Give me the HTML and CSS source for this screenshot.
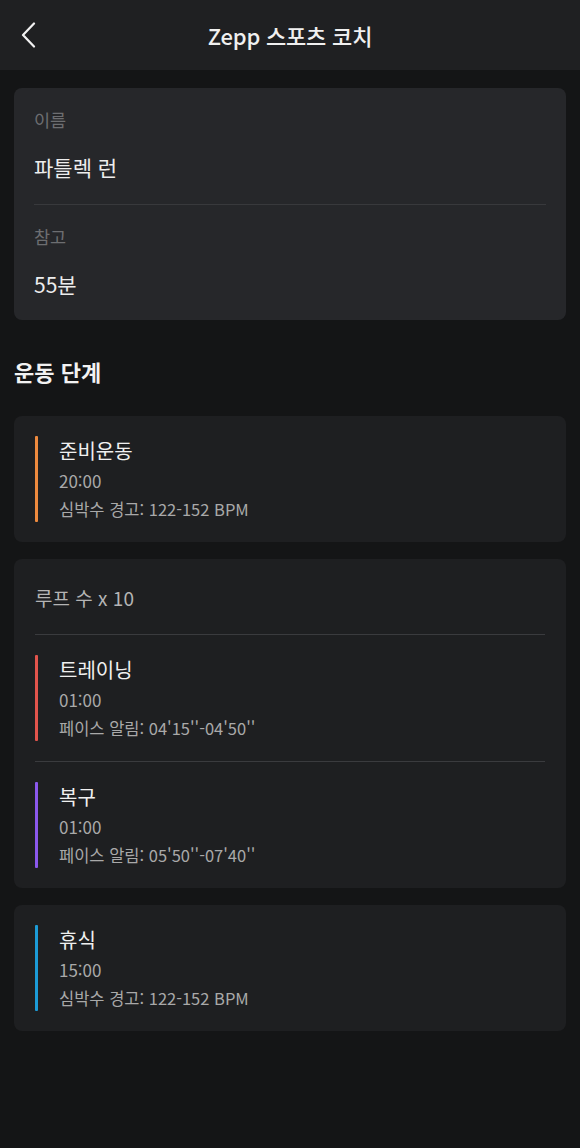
FILE: index.html
```html
<!DOCTYPE html>
<html lang="ko">
<head>
<meta charset="utf-8">
<title>Zepp 스포츠 코치</title>
<link rel="stylesheet" href="styles.css">
</head>
<body>
<header class="topbar">
  <button class="back" aria-label="뒤로">
    <svg width="16" height="26" viewBox="0 0 16 26"><path d="M13 1.5 L2 13 L13 24.5" fill="none" stroke="#f2f2f2" stroke-width="2.2" stroke-linecap="round" stroke-linejoin="round"/></svg>
  </button>
  <h1 class="title">Zepp 스포츠 코치</h1>
</header>
<main class="content">
  <section class="info-card">
    <div class="field">
      <div class="field-label">이름</div>
      <div class="field-value">파틀렉 런</div>
    </div>
    <div class="field">
      <div class="field-label">참고</div>
      <div class="field-value">55분</div>
    </div>
  </section>

  <h2 class="section-title">운동 단계</h2>

  <section class="step-card">
    <div class="step">
      <span class="bar bar-orange"></span>
      <div class="step-text">
        <div class="step-name">준비운동</div>
        <div class="step-time">20:00</div>
        <div class="step-detail">심박수 경고: 122-152 BPM</div>
      </div>
    </div>
  </section>

  <section class="step-card">
    <div class="loop-head">루프 수 x 10</div>
    <div class="step">
      <span class="bar bar-red"></span>
      <div class="step-text">
        <div class="step-name">트레이닝</div>
        <div class="step-time">01:00</div>
        <div class="step-detail">페이스 알림: 04'15''-04'50''</div>
      </div>
    </div>
    <div class="step">
      <span class="bar bar-purple"></span>
      <div class="step-text">
        <div class="step-name">복구</div>
        <div class="step-time">01:00</div>
        <div class="step-detail">페이스 알림: 05'50''-07'40''</div>
      </div>
    </div>
  </section>

  <section class="step-card">
    <div class="step">
      <span class="bar bar-blue"></span>
      <div class="step-text">
        <div class="step-name">휴식</div>
        <div class="step-time">15:00</div>
        <div class="step-detail">심박수 경고: 122-152 BPM</div>
      </div>
    </div>
  </section>
</main>
</body>
</html>
```

FILE: styles.css
```css
* { box-sizing: border-box; }

html, body {
  margin: 0;
  padding: 0;
  background: #141516;
  color: #ececec;
  font-family: "Noto Sans CJK KR", "Noto Sans", sans-serif;
}

.topbar {
  height: 70px;
  background: #1f2022;
  display: flex;
  align-items: center;
  justify-content: center;
  position: relative;
}

.back {
  position: absolute;
  left: 21px;
  top: 22px;
  background: none;
  border: 0;
  padding: 0;
  width: 16px;
  height: 26px;
}

.title {
  margin: 0;
  font-size: 22px;
  font-weight: 500;
  color: #f0f0f0;
  letter-spacing: -0.2px;
}

.content {
  padding: 18px 14px 40px;
  display: flex;
  flex-direction: column;
}

.info-card {
  background: #26272a;
  border-radius: 8px;
  padding: 0 20px;
}

.field {
  height: 116px;
  padding-top: 19px;
}

.field + .field {
  border-top: 1px solid #38393c;
}

.field-label {
  font-size: 17.5px;
  line-height: 26px;
  color: #6d6e71;
}

.field-value {
  margin-top: 19px;
  font-size: 21px;
  line-height: 30px;
  color: #ededed;
}

.section-title {
  margin: 36px 0 30px;
  font-size: 22px;
  line-height: 30px;
  font-weight: 700;
  color: #f2f2f2;
}

.step-card {
  background: #1e1f21;
  border-radius: 8px;
  padding: 0 21px;
}

.step-card + .step-card {
  margin-top: 17px;
}

.loop-head {
  height: 76px;
  line-height: 78px;
  font-size: 19px;
  color: #b4b4b4;
  border-bottom: 1px solid #3a3b3e;
}

.step {
  display: flex;
  gap: 21px;
  padding: 20px 0;
}

.step + .step {
  border-top: 1px solid #3a3b3e;
}

.bar {
  width: 3px;
  flex: none;
  border-radius: 1px;
}

.bar-orange { background: #ee8a3e; }
.bar-red { background: #e2544c; }
.bar-purple { background: #8b58ec; }
.bar-blue { background: #1c9bd6; }

.step-text {
  display: flex;
  flex-direction: column;
}

.step-name {
  font-size: 20px;
  line-height: 30px;
  color: #f0f0f0;
}

.step-time {
  font-size: 17px;
  line-height: 30px;
  color: #a9a9a9;
}

.step-detail {
  font-size: 16.5px;
  line-height: 26px;
  color: #a9a9a9;
}
```
